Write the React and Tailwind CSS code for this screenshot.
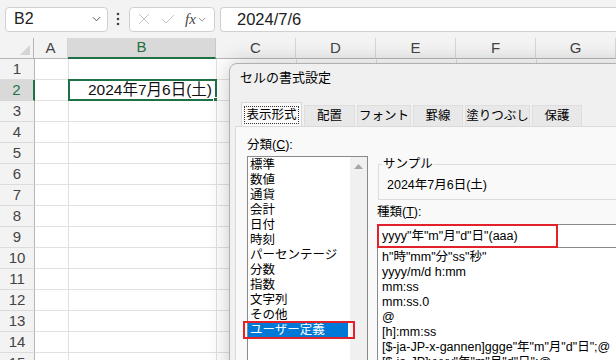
import React from 'react';

const FONT = "font-['Liberation_Sans','Noto_Sans_CJK_JP',sans-serif]";

const COLS = [
  { label: 'A', w: 'w-[34px]' },
  { label: 'B', w: 'w-[148px]', sel: true },
  { label: 'C', w: 'w-[80px]' },
  { label: 'D', w: 'w-[80px]' },
  { label: 'E', w: 'w-[80px]' },
  { label: 'F', w: 'w-[80px]' },
  { label: 'G', w: 'w-[80px]' },
];

const ROWS = [1, 2, 3, 4, 5, 6, 7, 8, 9, 10, 11, 12, 13, 14, 15];

const CATEGORIES = ['標準', '数値', '通貨', '会計', '日付', '時刻', 'パーセンテージ', '分数', '指数', '文字列', 'その他', 'ユーザー定義'];

const FORMATS = [
  'h"時"mm"分"ss"秒"',
  'yyyy/m/d h:mm',
  'mm:ss',
  'mm:ss.0',
  '@',
  '[h]:mm:ss',
  '[$-ja-JP-x-gannen]ggge"年"m"月"d"日";@',
  '[$-ja-JP]yyyy"年"m"月"d"日";@',
];

const TABS = [
  { label: '配置', w: 'w-[51px]' },
  { label: 'フォント', w: 'w-[54px]' },
  { label: '罫線', w: 'w-[50px]' },
  { label: '塗りつぶし', w: 'w-[65px]' },
  { label: '保護', w: 'w-[50px]' },
];

function Chevron({ className }) {
  return (
    <svg viewBox="0 0 10 6" className={className} fill="none" stroke="currentColor" strokeWidth="1.1">
      <path d="M1 1l4 4 4-4" />
    </svg>
  );
}

function FormulaBar() {
  return (
    <div className="h-[38px] flex items-center pl-[5px]">
      <div className="w-[103px] h-[25px] rounded-[4px] border border-[#d0d0d0] bg-white flex items-center pl-[8px] pr-[6px]">
        <span className="text-[16px] text-[#222] flex-1">B2</span>
        <Chevron className="w-[9px] h-[6px] text-[#555]" />
      </div>
      <svg viewBox="0 0 4 14" className="w-[4px] h-[14px] ml-[8px] text-[#444]" fill="currentColor">
        <circle cx="2" cy="2" r="1.3" />
        <circle cx="2" cy="7" r="1.3" />
        <circle cx="2" cy="12" r="1.3" />
      </svg>
      <div className="ml-[9px] w-[86px] h-[25px] rounded-[4px] border border-[#d0d0d0] bg-white flex items-center pl-[8px]">
        <svg viewBox="0 0 12 12" className="w-[12px] h-[12px] text-[#c4c4c4]" fill="none" stroke="currentColor" strokeWidth="1">
          <path d="M1 1l10 10M11 1L1 11" />
        </svg>
        <svg viewBox="0 0 14 10" className="ml-[11px] w-[14px] h-[10px] text-[#c4c4c4]" fill="none" stroke="currentColor" strokeWidth="1">
          <path d="M1 5l4 4 8-8" />
        </svg>
        <span className="ml-[10px] font-['Liberation_Serif',serif] italic text-[15px] text-[#444] leading-none">fx</span>
        <Chevron className="ml-[2px] w-[8px] h-[5px] text-[#888]" />
      </div>
      <div className="ml-[5px] flex-1 h-[25px] rounded-l-[4px] border border-r-0 border-[#d0d0d0] bg-white flex items-center pl-[16px]">
        <span className="text-[16.5px] text-[#222]">2024/7/6</span>
      </div>
    </div>
  );
}

function HeaderRow() {
  return (
    <div className="flex h-[21px]">
      <div className="w-[35px] bg-[#f3f3f3] border-r border-b border-[#b6b6b6] flex items-end justify-end pr-[3px] pb-[3px]">
        <svg viewBox="0 0 10 10" className="w-[10px] h-[10px]">
          <polygon points="10,0 10,10 0,10" fill="#d4d4d4" />
        </svg>
      </div>
      {COLS.map((c) => (
        <div
          key={c.label}
          className={`${c.w} shrink-0 flex items-center justify-center text-[15px] ${
            c.sel
              ? 'bg-[#d9d9d9] border-b-2 border-b-[#1e7145] border-r border-r-[#c8c8c8] text-[#1e7145]'
              : 'bg-[#f3f3f3] border-r border-r-[#d6d6d6] border-b border-b-[#b6b6b6] text-[#444]'
          }`}
        >
          {c.label}
        </div>
      ))}
    </div>
  );
}

function GridRow({ n }) {
  const sel = n === 2;
  return (
    <div className="flex h-[21px]">
      <div
        className={`w-[35px] shrink-0 flex items-center justify-center text-[15px] border-b ${
          sel
            ? 'bg-[#d9d9d9] border-r-2 border-r-[#1e7145] border-b-[#d6d6d6] text-[#1e7145]'
            : 'bg-[#f3f3f3] border-r border-r-[#b6b6b6] border-b-[#dcdcdc] text-[#444]'
        }`}
      >
        {n}
      </div>
      {COLS.map((c) => (
        <div key={c.label} className={`${c.w} shrink-0 bg-white border-r border-b border-[#e1e1e1] relative`}>
          {sel && c.sel && (
            <>
              <div className="h-full flex items-center justify-end pr-[4px] text-[15.5px] text-[#111]">2024年7月6日(土)</div>
              <div className="absolute -left-[1px] -top-[1px] -right-[1px] -bottom-[1px] border-2 border-[#1e7145]" />
              <div className="absolute -right-[3px] -bottom-[3px] w-[6px] h-[6px] bg-[#1e7145] border border-white" />
            </>
          )}
        </div>
      ))}
    </div>
  );
}

function Dialog() {
  return (
    <div className="absolute left-[229px] top-[63px] w-[420px] h-[320px] rounded-tl-[8px] border border-[#b0b0b0] bg-[#f0f0f0] shadow-[0_0_22px_rgba(0,0,0,0.22)] flex flex-col text-[12.5px] text-black">
      <div className="h-[27px] flex items-center pl-[10px] text-[13px]">セルの書式設定</div>
      <div className="mt-[11px] h-[24px] flex items-end pl-[11px] gap-[2px]">
        <div className="w-[61px] h-[24px] bg-[#f9f9f9] border border-b-0 border-[#d8d8d8] flex items-center justify-center">
          <span className="px-[1px] border border-dotted border-[#333] leading-[16px] text-[12.5px] whitespace-nowrap">表示形式</span>
        </div>
        {TABS.map((t) => (
          <div key={t.label} className={`${t.w} h-[21px] bg-[#e8e8e8] border border-b-0 border-[#dedede] flex items-center justify-center text-[12.5px] whitespace-nowrap`}>
            {t.label}
          </div>
        ))}
      </div>
      <div className="flex-1 ml-[5px] bg-[#f9f9f9] border-t border-l border-[#dadada] flex pt-[11px] pl-[11px] gap-[9px]">
        <div className="flex flex-col">
          <div className="leading-[15px] h-[15px]">
            分類(<span className="underline">C</span>):
          </div>
          <div className="mt-[3px] w-[121px] h-[220px] bg-white border border-[#8a8a8a] flex">
            <div className="w-[100px] pt-[1px] flex flex-col">
              {CATEGORIES.map((c) => {
                const sel = c === 'ユーザー定義';
                return (
                  <div
                    key={c}
                    className={`h-[15px] leading-[15px] pl-[2px] relative whitespace-nowrap ${sel ? 'bg-[#0078d7] text-white' : ''}`}
                  >
                    {c}
                    {sel && <div className="absolute -left-[5px] -right-[7px] -top-[2px] -bottom-[1px] border-2 border-[#e3212b]" />}
                  </div>
                );
              })}
            </div>
            <div className="ml-auto w-[17px] bg-[#f0f0f0] flex justify-center pt-[7px]">
              <svg viewBox="0 0 9 5" className="w-[9px] h-[5px]">
                <polygon points="4.5,0 9,5 0,5" fill="#a6a6a6" />
              </svg>
            </div>
          </div>
        </div>
        <div className="flex flex-col flex-1">
          <fieldset className="mt-[19px] ml-[1px] border border-[#dcdcdc]">
            <legend className="ml-[3px] px-[1px] leading-[15px]">サンプル</legend>
            <div className="pl-[8px] pt-[6px] pb-[6px] leading-[15px]">2024年7月6日(土)</div>
          </fieldset>
          <div className="mt-[5px] leading-[15px] h-[15px]">
            種類(<span className="underline">T</span>):
          </div>
          <div className="mt-[4px] h-[24px] w-[260px] bg-white border border-[#8a8a8a] flex items-center pl-[4px] relative">
            <span className="leading-[15px]">yyyy"年"m"月"d"日"(aaa)</span>
            <div className="absolute -left-[1px] -top-[1px] w-[181px] h-[24px] border-2 border-[#e3212b]" />
          </div>
          <div className="w-[260px] flex-1 bg-white border-l border-[#8a8a8a] pt-[2px] pl-[4px] flex flex-col">
            {FORMATS.map((f) => (
              <div key={f} className="h-[15px] leading-[15px] whitespace-nowrap">{f}</div>
            ))}
          </div>
        </div>
      </div>
    </div>
  );
}

export default function App() {
  return (
    <div className={`w-[616px] h-[360px] overflow-hidden relative bg-[#f3f3f3] ${FONT}`}>
      <FormulaBar />
      <div className="flex flex-col">
        <HeaderRow />
        {ROWS.map((n) => (
          <GridRow key={n} n={n} />
        ))}
      </div>
      <Dialog />
    </div>
  );
}
